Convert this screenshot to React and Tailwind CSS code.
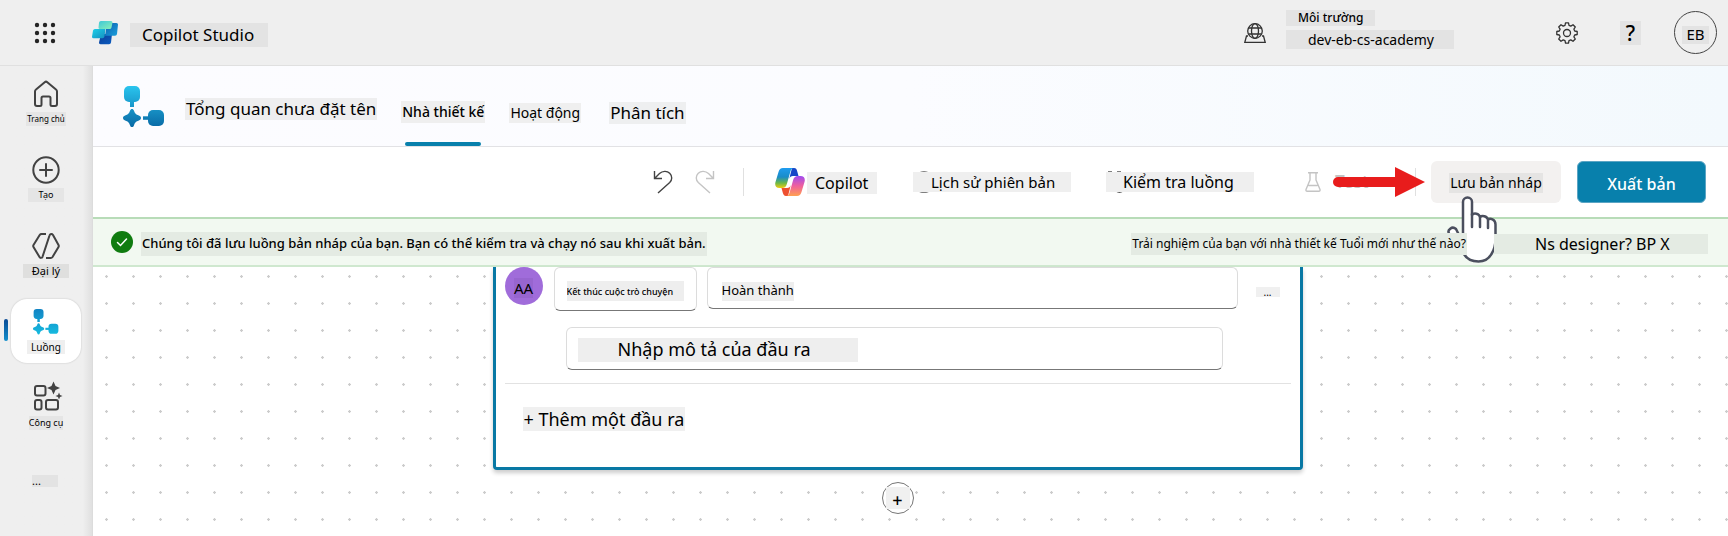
const Hl = ({ className = "", children }) => (
  <span className={`inline-flex items-center whitespace-nowrap ${className}`}>{children}</span>
);

const FlowIcon = ({ className, id, from, to }) => (
  <svg viewBox="0 0 42 42" className={className} aria-hidden="true">
    <defs>
      <linearGradient id={id} x1="0" y1="0" x2="0" y2="42" gradientUnits="userSpaceOnUse">
        <stop offset="0" stopColor={from} />
        <stop offset="1" stopColor={to} />
      </linearGradient>
    </defs>
    <g fill={`url(#${id})`}>
      <rect x="1" y="0" width="16" height="16" rx="5" />
      <rect x="7" y="15" width="4" height="6" />
      <path d="M9 23c1 0 1.500.6 1.900 1.600 1.100 3 1.900 3.900 5 5 1.300.5 2.100 1.200 2.100 2.400s-.8 1.900-2.100 2.400c-3.100 1.100-3.900 2-5 5C10.500 40.400 10 41 9 41s-1.500-.6-1.900-1.600c-1.100-3-1.900-3.900-5-5C.8 33.900 0 33.200 0 32s.8-1.900 2.100-2.400c3.100-1.100 3.900-2 5-5C7.500 23.600 8 23 9 23z" />
      <rect x="20" y="30.300" width="6" height="3.500" />
      <rect x="25" y="24" width="16" height="16" rx="5" />
    </g>
  </svg>
);

const StudioLogo = () => (
  <svg viewBox="0 0 26 24" className="h-6 w-[26px]" aria-hidden="true">
    <defs>
      <linearGradient id="lg1" x1="0" y1="0" x2="1" y2="1"><stop offset="0" stopColor="#3ec8d8" /><stop offset="1" stopColor="#8df0b8" /></linearGradient>
      <linearGradient id="lg2" x1="0" y1="0" x2="1" y2="1"><stop offset="0" stopColor="#0c5fb0" /><stop offset="1" stopColor="#1ba0dc" /></linearGradient>
      <linearGradient id="lg3" x1="0" y1="0" x2="1" y2="1"><stop offset="0" stopColor="#1ed0e8" /><stop offset="1" stopColor="#1590c0" /></linearGradient>
      <linearGradient id="lg4" x1="0" y1="0" x2="1" y2="1"><stop offset="0" stopColor="#0d3f98" /><stop offset="1" stopColor="#0a5cc0" /></linearGradient>
    </defs>
    <path d="M9 13h11l-1 8.500a2 2 0 0 1-2 1.700H8.500a1.500 1.500 0 0 1-1.500-1.700z" fill="url(#lg4)" />
    <path d="M15 2h9.500a1.500 1.500 0 0 1 1.500 1.500l-1 9.500a2 2 0 0 1-2 1.700H13z" fill="url(#lg2)" />
    <path d="M3 8h10.500l-1 7.500a2 2 0 0 1-2 1.700H1.500A1.500 1.500 0 0 1 0 15.700l1-6.200A2 2 0 0 1 3 8z" fill="url(#lg3)" />
    <path d="M9 0h10a1.500 1.500 0 0 1 1.500 1.500l-1 5a2 2 0 0 1-2 1.500H8A1.500 1.500 0 0 1 6.500 6.500L7 1.800A2 2 0 0 1 9 0z" fill="url(#lg1)" />
  </svg>
);

const CopilotIcon = () => (
  <svg viewBox="0 0 30 28" className="h-7 w-[30px]" aria-hidden="true">
    <defs>
      <linearGradient id="cp1" x1="0" y1="0" x2="0" y2="1"><stop offset="0" stopColor="#1f9cf0" /><stop offset=".45" stopColor="#1a8cc8" /><stop offset=".75" stopColor="#6cb848" /><stop offset="1" stopColor="#f2cc10" /></linearGradient>
      <linearGradient id="cp2" x1="0" y1="0" x2="0" y2="1"><stop offset="0" stopColor="#a04af0" /><stop offset=".5" stopColor="#f0609c" /><stop offset="1" stopColor="#ffa050" /></linearGradient>
    </defs>
    <path d="M17 0h2c2 0 2.600 1.200 3.200 3.200L23.500 8H18c-2 0-3.200 1-3.800 3z" fill="#1746c8" />
    <path d="M13 28h-2c-2 0-2.600-1.200-3.200-3.200L6.500 20H12c2 0 3.200-1 3.800-3z" fill="#ee5030" />
    <path d="M8 0h11c-2 0-3 1.500-3.600 3.500L12 15.500C11.200 18.500 10 20 7 20H4.500C1 20-.5 17.500.5 14L3.500 4C4.300 1.200 5.500 0 8 0z" fill="url(#cp1)" />
    <path d="M22 28H11c2 0 3-1.500 3.600-3.500L18 12.500C18.800 9.500 20 8 23 8h2.500c3.500 0 5 2.500 4 6l-3 10c-.8 2.800-2 4-4.500 4z" fill="url(#cp2)" />
  </svg>
);

const UndoIcon = ({ className }) => (
  <svg viewBox="0 0 20 24" className={className} fill="none" stroke="currentColor" strokeWidth="1.400" aria-hidden="true">
    <path d="M1.500 1v7.500H9M1.800 8.200 6.500 3.600C9.500.8 14 .6 16.700 3.200c2.800 2.700 2.600 6.800 0 9.300L5 23" />
  </svg>
);

const NavItem = ({ label, icon, active, labelClass }) => (
  <li className="relative flex w-full justify-center">
    {active && <span className="absolute top-5 left-1 h-[22px] w-1 rounded-full bg-linear-to-b from-[#0a4a94] to-[#1590cc]" />}
    <a
      href="#"
      className={`flex h-16 w-[70px] flex-col items-center pt-2 text-[#424242] ${active ? "rounded-2xl bg-white shadow-[0_0_2px_rgba(0,0,0,0.2)]" : ""}`}
    >
      <span className="flex h-[30px] items-center">{icon}</span>
      <Hl className={`mt-[3px] h-[14px] justify-center text-black ${labelClass}`}>{label}</Hl>
    </a>
  </li>
);

const iconProps = { fill: "none", stroke: "currentColor", strokeWidth: 2, "aria-hidden": true };

const NAV = [
  {
    label: "Trang chủ",
    labelClass: "bg-[#e5e5e5] px-px text-[8px]",
    icon: (
      <svg viewBox="0 0 28 28" className="size-7" {...iconProps} strokeLinejoin="round">
        <path d="M3 11.500c0-.8.300-1.500 1-2l8.700-7.300a2 2 0 0 1 2.600 0L24 9.500c.700.500 1 1.200 1 2V24a2 2 0 0 1-2 2h-3a1.500 1.500 0 0 1-1.500-1.500V18a1.500 1.500 0 0 0-1.500-1.500h-6A1.500 1.500 0 0 0 9.500 18v6.500A1.500 1.500 0 0 1 8 26H5a2 2 0 0 1-2-2z" />
      </svg>
    ),
  },
  {
    label: "Tạo",
    labelClass: "w-9 bg-[#e5e5e5] text-[9px]",
    icon: (
      <svg viewBox="0 0 28 28" className="size-7" {...iconProps} strokeLinecap="round">
        <circle cx="14" cy="14" r="12.700" />
        <path d="M14 8v12M8 14h12" />
      </svg>
    ),
  },
  {
    label: "Đại lý",
    labelClass: "w-[46px] bg-[#dfdfde] text-[11px]",
    icon: (
      <svg viewBox="0 0 28 28" className="size-7" {...iconProps} strokeLinejoin="round">
        <path d="M14 2H9.500c-.8 0-1.400.4-1.800 1L1.500 13c-.4.700-.4 1.300 0 2l6 10c.6 1.200 2.500 1.200 3-.2L17.500 3.500C18 1.700 20 1.500 21 3l5.500 10c.4.700.4 1.300 0 2l-6 10c-.4.600-1 1-1.800 1H14" />
      </svg>
    ),
  },
  {
    label: "Luồng",
    active: true,
    labelClass: "bg-[#efefef] px-1 text-[10px]",
    icon: <FlowIcon id="flow-nav" from="#1284c4" to="#16bce0" className="size-[26px]" />,
  },
  {
    label: "Công cụ",
    labelClass: "bg-[#e5e5e5] text-[9px]",
    icon: (
      <svg viewBox="0 0 30 30" className="mb-1 ml-1 size-[30px]" {...iconProps}>
        <rect x="2" y="5" width="10.500" height="9.500" rx="2" />
        <rect x="2" y="19" width="6.500" height="9.500" rx="2" />
        <rect x="13" y="19" width="12" height="9.500" rx="2" />
        <path d="M20.500.500 22.500 5l4.500 2-4.500 2-2 4.500-2-4.500-4.500-2 4.500-2zM26 11.500l1 2.500 2.500 1-2.500 1-1 2.500-1-2.500-2.500-1 2.500-1z" fill="currentColor" stroke="none" />
      </svg>
    ),
  },
];

const TopBar = () => (
  <header className="flex h-[66px] shrink-0 items-center border-b border-[#e0e0e0] bg-[#efefef] pr-[11px] pl-[34px]">
    <button aria-label="Apps" className="text-[#242424]">
      <svg viewBox="0 0 22 22" className="size-[22px]" fill="currentColor" aria-hidden="true">
        {[3, 11, 19].map((y) => [3, 11, 19].map((x) => <circle key={`${x}-${y}`} cx={x} cy={y} r="2.200" />))}
      </svg>
    </button>
    <a href="#" className="ml-9 flex items-center gap-3">
      <StudioLogo />
      <Hl className="mt-1 h-6 bg-[#e3e3e3] pr-[14px] pl-3 text-[17px]">Copilot Studio</Hl>
    </a>
    <div className="ml-auto flex items-center">
      <svg viewBox="0 0 22 20" className="h-5 w-[22px]" fill="none" stroke="#333" strokeWidth="1.300" aria-hidden="true">
        <circle cx="11" cy="8" r="7.300" />
        <ellipse cx="11" cy="8" rx="3.500" ry="7.300" />
        <path d="M4.500 5h13M4.500 11h13M4 13H2.500L.8 19.300h20.400L19.500 13H18" />
      </svg>
      <div className="mb-[6px] ml-5 flex w-[168px] flex-col items-start gap-1">
        <Hl className="h-4 bg-[#e3e3e3] px-3 text-xs font-medium">Môi trường</Hl>
        <Hl className="h-[19px] w-full bg-[#e3e3e3] pl-[22px] text-sm">dev-eb-cs-academy</Hl>
      </div>
      <button aria-label="Settings" className="ml-[102px]">
        <svg viewBox="0 0 22 22" className="size-[22px]" fill="none" stroke="#333" strokeWidth="1.300" strokeLinejoin="round" aria-hidden="true">
          <path d="M9 3.300 9.500.8h3l.5 2.500 1.800.8L17 2.700 19.300 5l-1.400 2.200.8 1.800 2.500.5v3l-2.500.5-.8 1.800 1.400 2.200-2.300 2.300-2.200-1.400-1.800.8-.5 2.500h-3L9 18.700l-1.800-.8L5 19.300 2.700 17l1.400-2.200-.8-1.800-2.500-.5v-3L3.300 9l.8-1.800L2.700 5 5 2.700l2.200 1.400z" />
          <circle cx="11" cy="11" r="3.500" />
        </svg>
      </button>
      <button aria-label="Help" className="ml-[42px] flex h-6 w-[21px] items-center justify-center bg-[#e3e3e3] pt-[3px] text-[21px] font-medium">?</button>
      <button aria-label="Account" className="ml-[33px] flex size-[43px] items-center justify-center rounded-full border border-[#444]">
        <Hl className="mt-1 h-[18px] bg-[#e3e3e3] px-1 text-[15px]">EB</Hl>
      </button>
    </div>
  </header>
);

const Hand = () => (
  <svg viewBox="0 0 56 70" className="pointer-events-none absolute top-[34px] left-3 z-10 h-[70px] w-14" aria-hidden="true">
    <path
      d="M20 48V7a4.500 4.500 0 0 1 9 0V20c2-2.500 7-1.500 8 2 2-2 7-1 8 2.500 2-1.500 7.500-.5 7.500 5V44c0 8-1.500 11-4 15-3 5-7 7.500-13 7.500-8 0-12-3-15-8L6 38.500c-2-3.500 3-8 7-4.500z"
      fill="#fff"
      stroke="#4b4f5e"
      strokeWidth="2.500"
      strokeLinejoin="round"
    />
    <path d="M29 19v13M37 22v10M45 25v8" stroke="#4b4f5e" strokeWidth="2.500" strokeLinecap="round" />
  </svg>
);

const Toolbar = () => (
  <div className="flex h-[70px] shrink-0 items-center justify-end bg-white pr-[22px]">
    <button aria-label="Undo" className="text-[#424242]"><UndoIcon className="h-6 w-5" /></button>
    <button aria-label="Redo" disabled className="ml-[22px] text-[#c4c4c4]"><UndoIcon className="h-6 w-5 -scale-x-100" /></button>
    <span className="ml-7 h-7 w-px bg-[#e0e0e0]" />
    <button className="ml-[31px] flex items-center">
      <CopilotIcon />
      <Hl className="mt-[2px] ml-[2px] h-[22px] w-[70px] bg-[#efefef] pl-2 text-base">Copilot</Hl>
    </button>
    <button className="relative ml-9 flex items-center">
      <svg viewBox="0 0 22 22" className="absolute left-0 size-[22px]" fill="none" stroke="#555" strokeWidth="1.300" aria-hidden="true"><circle cx="11" cy="11" r="10.200" /></svg>
      <Hl className="relative h-5 w-[158px] bg-[#efefef] pl-[18px] text-[15px]">Lịch sử phiên bản</Hl>
    </button>
    <button className="relative ml-[35px] flex items-center">
      <svg viewBox="0 0 22 22" className="absolute left-0 size-[22px]" fill="none" stroke="#555" strokeWidth="1.300" aria-hidden="true"><path d="M2 1h4M11 1h4M10 20c2 1.500 5 1.500 7 0" /></svg>
      <Hl className="relative h-5 w-[148px] bg-[#efefef] pl-[17px] text-base">Kiểm tra luồng</Hl>
    </button>
    <button disabled className="relative ml-[51px] flex items-center text-[#c4c4c4]">
      <svg viewBox="0 0 16 20" className="h-5 w-4" fill="none" stroke="currentColor" strokeWidth="1.400" strokeLinejoin="round" aria-hidden="true">
        <path d="M3 .8h10M5 .8V8L1 17.500c-.3 1 .2 1.700 1.200 1.700h11.600c1 0 1.500-.7 1.200-1.700L11 8V.8M3.500 13.500h9" />
      </svg>
      <span className="ml-[14px] w-[34px] text-left text-[17px] font-semibold">Test</span>
      <svg viewBox="0 0 92 30" className="absolute left-7 h-[30px] w-[92px] max-w-none" aria-hidden="true">
        <path d="M5 10h57V0l30 15-30 15V20H5A5 5 0 0 1 5 10z" fill="#e81c1c" />
      </svg>
    </button>
    <span className="ml-[46px] h-7 w-px bg-[#e0e0e0]" />
    <div className="relative ml-[15px]">
      <button className="flex h-[42px] w-[130px] items-center justify-center rounded-md bg-[#f3f1f0]">
        <Hl className="mt-[2px] h-5 bg-[#e5e4e3] px-px text-sm">Lưu bản nháp</Hl>
      </button>
      <Hand />
    </div>
    <button className="ml-4 flex h-[42px] w-[129px] items-center justify-center rounded-md border border-[#5ba5c4] bg-[#0880ac] pt-[3px] text-base font-medium text-white">Xuất bản</button>
  </div>
);

const Field = ({ label, value, placeholder, box, input }) => (
  <label className={`flex items-center rounded-md border border-[#dcdcdc] border-b-[#777] bg-white ${box}`}>
    <input aria-label={label} defaultValue={value} placeholder={placeholder} className={`min-w-0 bg-[#eeeeee] text-black outline-none placeholder:text-black ${input}`} />
  </label>
);

const Canvas = () => (
  <div className="flex flex-1 flex-col items-center bg-white bg-[radial-gradient(circle,#cccccc_1px,transparent_1.5px)] bg-[size:27px_27px] bg-[position:0_-4px] pr-[26px]">
    <section className="w-full max-w-[810px] rounded-b border-3 border-t-0 border-[#0878a4] bg-white px-[9px] pb-9 shadow-[0_3px_4px_rgba(0,0,0,0.2)]">
      <div className="flex items-start">
        <span className="flex size-[38px] shrink-0 items-center justify-center rounded-full bg-[#a06cda] text-[15px]"><Hl className="mt-1 h-5 bg-[#9765cf]">AA</Hl></span>
        <Field label="Tên" value="Kết thúc cuộc trò chuyện" box="ml-[11px] h-11 w-[143px] shrink-0 px-3 pt-1" input="h-5 w-full text-[9px] font-medium" />
        <Field label="Giá trị" value="Hoàn thành" box="ml-[10px] h-[42px] flex-1 pt-[6px] pl-[14px]" input="h-[19px] w-[72px] text-[13px]" />
        <button aria-label="Thêm" className="mt-5 mr-[11px] ml-[18px] flex h-[10px] w-6 items-center justify-center bg-[#f0f0f0] text-[10px]">...</button>
      </div>
      <Field label="Mô tả" placeholder="Nhập mô tả của đầu ra" box="mt-4 mr-[68px] ml-[61px] h-[43px] pt-[2px] pl-[11px]" input="h-6 w-[280px] pl-10 text-[18px]" />
      <hr className="mt-[13px] border-[#e2e2e2]" />
      <button className="mt-[23px] ml-[18px] flex h-6 items-center bg-[#f0f0f0] px-px text-[18px]">+ Thêm một đầu ra</button>
    </section>
    <button aria-label="Add step" className="mt-3 flex size-8 items-center justify-center rounded-full border border-[#777] bg-white">
      <span className="flex h-[22px] w-6 items-center justify-center bg-[#f0f0f0] pt-1 text-lg font-medium">+</span>
    </button>
  </div>
);

export default function App() {
  return (
    <div className="flex min-h-screen flex-col bg-white font-['Noto_Sans',sans-serif] text-black">
      <TopBar />
      <div className="flex flex-1">
        <nav className="w-[93px] shrink-0 border-r border-[#dcdcdc] bg-[#efefef] bg-linear-to-r from-[#efefef] from-90% to-[#e0e0e0] pt-[5px]">
          <ul className="flex flex-col gap-3">
            {NAV.map((item) => <NavItem key={item.label} {...item} />)}
          </ul>
          <button aria-label="Xem thêm" className="mt-9 ml-8 flex h-3 w-[26px] items-center bg-[#e3e3e3] text-[11px]">...</button>
        </nav>
        <main className="flex min-w-0 flex-1 flex-col">
          <div className="flex h-[81px] shrink-0 border-b border-[#e2e2e5] bg-linear-to-r from-[#fcfcff] via-[#fbfcff] to-[#f3f9fd] pl-[30px]">
            <FlowIcon id="flow-head" from="#2ac4ee" to="#0868a4" className="mt-5 size-[42px]" />
            <h1 className="mt-8 ml-5 flex h-[22px] items-center bg-[#eeeeef] px-px text-[17px]">Tổng quan chưa đặt tên</h1>
            <a href="#" className="ml-6 flex flex-col items-center justify-between pt-[35px]">
              <Hl className="h-[22px] bg-[#efefef] px-px text-sm font-medium">Nhà thiết kế</Hl>
              <span className="h-1 w-[76px] rounded-full bg-[#0880ac]" />
            </a>
            <a href="#" className="mt-[34px] ml-6"><Hl className="h-5 bg-[#efefef] px-px text-sm">Hoạt động</Hl></a>
            <a href="#" className="mt-[35px] ml-7"><Hl className="h-[22px] bg-[#eeeff0] px-px text-[17px]">Phân tích</Hl></a>
          </div>
          <Toolbar />
          <div className="flex h-[50px] shrink-0 items-center border-t-2 border-b-2 border-t-[#b8dcb8] border-b-[#cfe8cf] bg-[#f2f9f1] pr-5 pl-[18px]">
            <svg viewBox="0 0 22 22" className="size-[22px]" aria-hidden="true">
              <circle cx="11" cy="11" r="11" fill="#107c10" />
              <path d="m6.500 11.500 3 3L15.500 8" fill="none" stroke="#fff" strokeWidth="1.500" strokeLinecap="round" />
            </svg>
            <Hl className="mt-[3px] ml-2 h-6 bg-[#e4ebe3] px-px text-[13px] font-medium">Chúng tôi đã lưu luồng bản nháp của bạn. Bạn có thể kiểm tra và chạy nó sau khi xuất bản.</Hl>
            <Hl className="relative z-20 mt-[3px] ml-auto h-[22px] bg-[#e4ebe3] px-px text-xs">Trải nghiệm của bạn với nhà thiết kế Tuổi mới như thế nào?</Hl>
            <Hl className="relative z-20 mt-[3px] ml-[27px] h-5 w-[214px] bg-[#e4ebe3] pl-[41px] text-base">Ns designer? BP X</Hl>
          </div>
          <Canvas />
        </main>
      </div>
    </div>
  );
}
